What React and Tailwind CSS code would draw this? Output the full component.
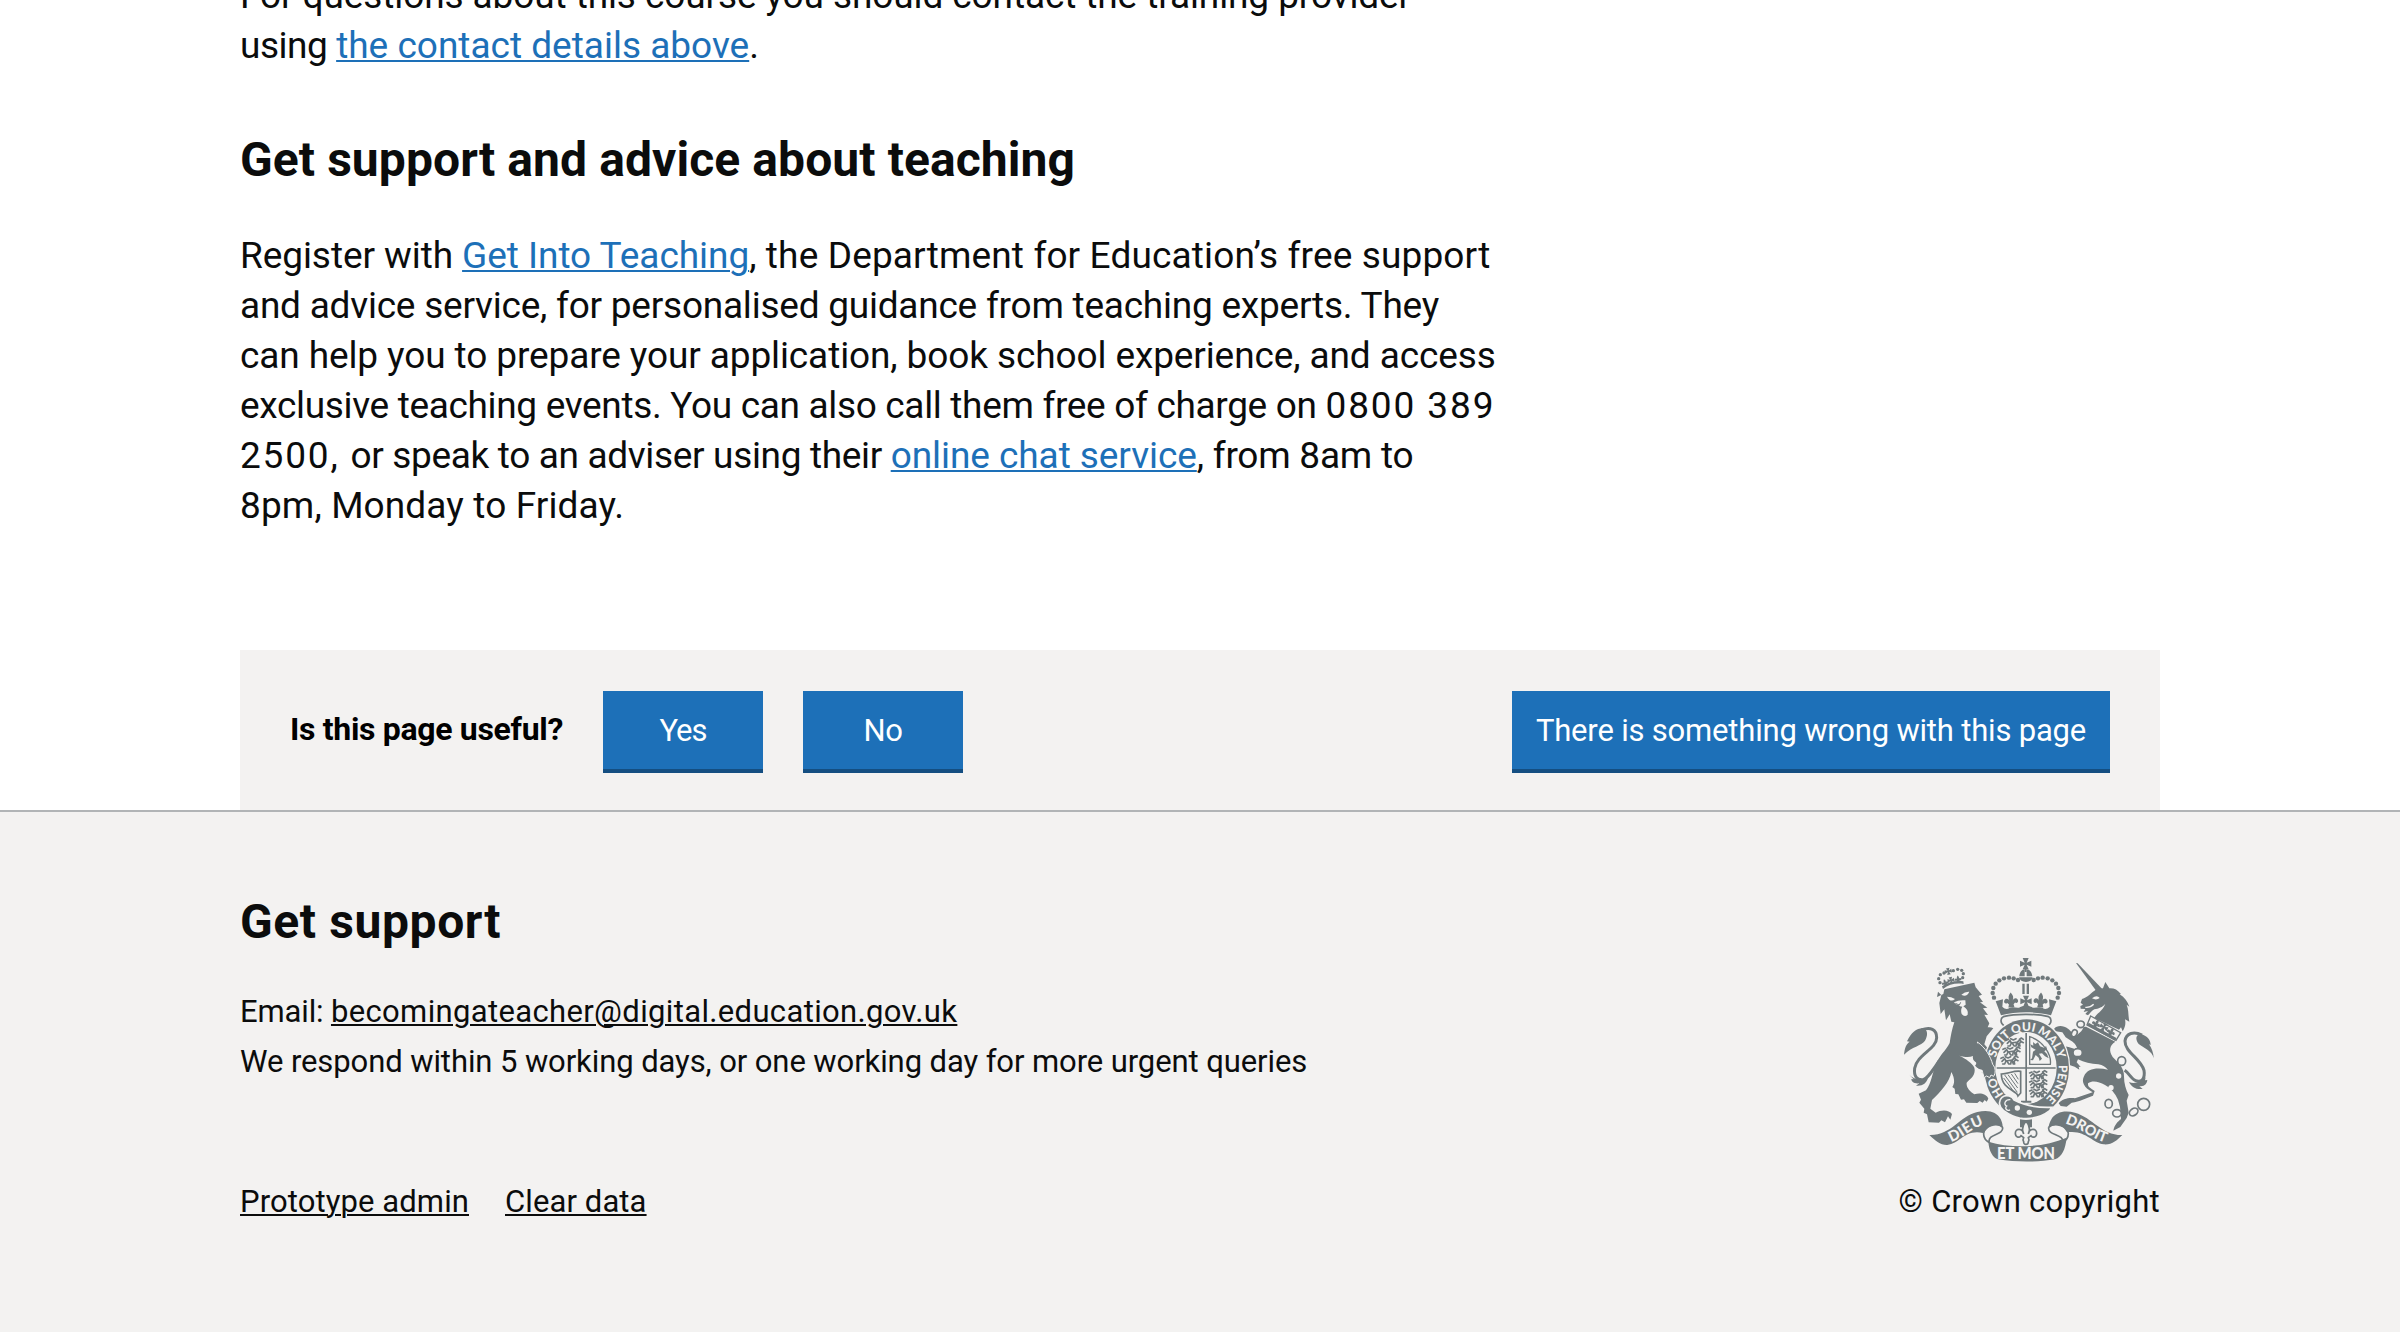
const crestDots = [
  [414, 120], [401, 115], [387, 113], [372, 115], [358, 121], [347, 131],
  [340, 144], [338, 159], [342, 173], [461, 120], [474, 115], [488, 113],
  [503, 115], [517, 121], [528, 131], [535, 144], [537, 159], [533, 173],
];

const lionCrownDots = [
  [180, 128], [176, 116], [181, 104], [192, 99], [220, 92], [233, 88], [245, 91], [250, 101], [248, 113],
];

function Fleur({ x, y, scale = 1, rotate = 0 }) {
  return (
    <path
      transform={`translate(${x} ${y}) rotate(${rotate}) scale(${scale})`}
      d="M0-18c6 7 8 13 4 22 2-7 11-9 14-1 2 6-4 9-8 6l-4 4 2 8H-8l2-8-4-4c-4 3-10 0-8-6 3-8 12-6 14 1-4-9-2-15 4-22Z"
    />
  );
}

function CrossPatty({ x, y, scale = 1, rotate = 0 }) {
  return (
    <path
      transform={`translate(${x} ${y}) rotate(${rotate}) scale(${scale})`}
      d="M-9-17H9L3-3l14-6V9L3 3l6 14H-9L-3 3l-14 6V-9l14 6Z"
    />
  );
}

function Passant({ x, y }) {
  return (
    <path
      transform={`translate(${x} ${y})`}
      fill="none"
      stroke="currentColor"
      strokeWidth="5"
      strokeLinecap="round"
      strokeLinejoin="round"
      d="M0 4l8-8 4 7 18-3 8-6 4 5-6 5 2 8M12 3l-4 9h-6M28 2l-2 10h-6M16 5l4 6M40-2l8 4M4-8l-7 3M30 0l4 12M36-8l6-4 6 4M10-10l8 4 8-4"
    />
  );
}

function Crest() {
  return (
    <svg viewBox="57 42 783 639" className="block h-[213px] w-[261px] text-[#6f787b]" fill="currentColor" aria-hidden="true">
      {/* crown */}
      <CrossPatty x={437} y={71} />
      <path d="M434 86h6v10h-6Z" />
      <path d="M418 109c1-13 8-20 16-21v21ZM440 88c9 1 16 8 17 21h-17ZM417 112h41c-2 9-9 14-20 14s-19-5-21-14Z" />
      <path d="M427 131h7v31h-7ZM440 131h7v31h-7Z" />
      {crestDots.map(([cx, cy]) => (
        <circle key={`${cx}-${cy}`} cx={cx} cy={cy} r="6.6" />
      ))}
      <CrossPatty x={438} y={184} />
      <Fleur x={393} y={178} scale={1.15} rotate={-3} />
      <Fleur x={482} y={178} scale={1.15} rotate={3} />
      <path d="M347 184l22-6-2 22c8 8 15 8 21 4 14-6 24 4 33-3 10-5 24-5 34 0 9 7 19-3 33 3 6 4 13 4 21-4l-2-22 22 6-16 42c-46-12-104-12-150 0Z" />
      <path d="M438 223c-26 0-49 2-68 7-10 5-9 21 2 27M438 223c26 0 49 2 68 7 10 5 9 21-2 27" fill="none" stroke="currentColor" strokeWidth="5" />

      {/* lion */}
      <path d="M171 171l19-9 3-14 90-20 4 14 19 22-10 4 13 18-9 1 22 16-13 2 15 20-11-1 15 26-5 12c6-1 12 0 17 3l-20 24-7 24c12 13 21 28 25 43 6 13 5 28 0 37-3 8-11 13-20 12l-13-8 5-8-13-2-12-10 6-8c-10-5-14-11-12-21-10 4-23 4-41-1 18 8 40 23 45 36 6 24-14 34-23 45-2 15 10 26 23 35 17-5 36-2 42 13l-5 9-6-5-6 8-9-5-7 6-33-1-7-10-9 1-8-16-9-1-2-16-7-5c7-12 8-25-3-45-5 31-33 60-58 84l-5 26 16 12c18-10 40-9 49 4l-5 17-7-10-9 18-11-6-7 7-31-1-5-24-10-5 2-12-15-18 5-9-7-18 22-10c17-23 18-48 27-70 9-32 33-49 44-72 3-21 7-42 14-62l-9-2-5-22-11 18-5-33-11 14-4-33 6-24-10-10Z" />
      <path d="M201 170q13 0 24 7-13 12-24-7ZM244 164q11-10 24-9-8 18-24 9Z" fill="#f3f2f1" />
      <path d="M222 187q14-8 34-6l1 13-7 5q17 11 13 25-9 9-18-2-4-14 2-22-8 0-12-6-8 2-13-7Z" fill="#f3f2f1" />
      <path d="M226 190l12 5 4-8" fill="none" stroke="currentColor" strokeWidth="3" />
      <path d="M189 147c18-14 39-19 62-15l-1-8c-23-3-44 1-64 15Z" />
      {lionCrownDots.map(([cx, cy]) => (
        <circle key={`${cx}-${cy}`} cx={cx} cy={cy} r="5" />
      ))}
      <CrossPatty x={205} y={94} scale={0.6} rotate={-12} />
      <CrossPatty x={213} y={121} scale={0.6} rotate={-12} />
      <Fleur x={195} y={127} scale={0.55} rotate={-18} />
      <Fleur x={234} y={116} scale={0.55} rotate={-5} />
      <path d="M72 344c2-20 6-31 17-39l-8-1c13-26 28-39 47-39 18 3 15 25 7 37-11 16-39 17-63 42Z" />
      <path d="M124 270c27-11 46-2 46 23 0 35-60 51-66 92-3 23 6 36 25 34 14-3 29-29 49-57" fill="none" stroke="currentColor" strokeWidth="9" />
      <path d="M88 404c12 13 33 19 56 10-5 16-16 25-36 23l10-7c-15 2-24-5-24-13l7 1Z" />

      {/* unicorn */}
      <path d="M588 69l5 1 73 76c-4 6-9 9-15 10Z" />
      <path d="M669 145l7-19 12 19c14-1 24 4 35 17l-4 1c15 9 24 22 29 37l-8-6c7 18 4 32 8 51l-13-7c3 14 0 24-7 36l-5-12-6 7-42-20-32-15c6-14 24-19 33-43-8 11-21 14-33 17-8 4-13 12-19 18l-8-4 8-9-13 3 5-9-14-1-1-8 8-4-7-6 4-11c17-4 27-18 43-29Z" />
      <path d="M636 175q15-12 23-1-10 8-23 1Z" fill="#f3f2f1" />
      <path d="M616 202c10 1 19-3 25-9" fill="none" stroke="#f3f2f1" strokeWidth="4" />
      <path d="M632 228l90 50-14 23-87-46Z" fill="#f3f2f1" stroke="currentColor" strokeWidth="4" />
      <g transform="rotate(29 670 262)">
        <Fleur x={646} y={261} scale={0.7} />
        <CrossPatty x={671} y={261} scale={0.75} />
        <Fleur x={697} y={261} scale={0.7} />
        <path d="M625 271h95v9h-95Z" />
      </g>
      <path d="M618 260l88 45c-19 12-19 28-8 46 18 19 35 32 34 59 0 21 6 39 14 55l-6 17 6 36-6 16-19 27-21 11c3-17 13-27 23-35l-3-36-6-22c-9-20-22-35-39-44-20-11-38-14-51-5-2 12 9 15 20 23l-5 14c-22 8-39 17-64 21l-15 12-18-2-6-8c10-15 35-18 49-15l53-18c-28-15-34-32-26-48 10-24 39-27 72-20-8-8-15-14-29-16-22-2-43-5-61-15l-4 9 12 14-6-1 2 9-14-9-18-6-13-15c-3-16-13-25-7-35l6 8 1-12c9-4 29 8 40 8-5-14-9-19-20-26l-16-10-10-15-21-3-4-7c9-12 28-11 42-1 8 5 15 19 26 20 12-9 18-16 20-24Z" />
      <path d="M821 355c-4-22-28-30-45-43-14-19-4-31 7-29 17 3 29 17 29 32l-5-2c8 11 14 27 14 42Z" />
      <path d="M786 285c-24-12-48-6-51 18-1 33 48 53 57 88 4 25-7 37-25 31-14-5-19-22-33-31" fill="none" stroke="currentColor" strokeWidth="9" />
      <path d="M747 426c15 7 34 1 50-14l-2 9 7-1c-2 15-11 19-24 19l10 8c-21 2-33-5-41-21Z" />
      <g fill="#f3f2f1" stroke="currentColor" strokeWidth="5">
        <ellipse cx="602" cy="253" rx="11" ry="10" />
        <ellipse cx="583" cy="280" rx="8" ry="11" transform="rotate(25 583 280)" />
        <ellipse cx="593" cy="338" rx="14" ry="12" />
        <ellipse cx="725" cy="363" rx="12" ry="13" />
        <ellipse cx="686" cy="491" rx="11" ry="13" />
        <ellipse cx="711" cy="520" rx="13" ry="11" />
        <ellipse cx="761" cy="516" rx="14" ry="10" transform="rotate(-35 761 516)" />
        <circle cx="791" cy="493" r="18" />
      </g>
      <circle cx="716" cy="408" r="8" fill="#f3f2f1" />
      <circle cx="693" cy="443" r="8" fill="#f3f2f1" />

      {/* garter */}
      <ellipse cx="440" cy="385" rx="131" ry="151" fill="#f3f2f1" />
      <ellipse cx="440" cy="385" rx="127" ry="147" />
      <ellipse cx="438" cy="384" rx="92" ry="108" fill="#f3f2f1" />
      <path id="garter-motto" d="M440 497A96 112 0 0 1 344 385A96 112 0 0 1 440 273A96 112 0 0 1 536 385A96 112 0 0 1 440 497" fill="none" />
      <g fill="#f3f2f1" fontFamily="Lato, sans-serif" fontWeight="900" fontSize="36" textAnchor="middle">
        <text><textPath href="#garter-motto" startOffset="108">HO</textPath></text>
        <text><textPath href="#garter-motto" startOffset="236">SOIT</textPath></text>
        <text><textPath href="#garter-motto" startOffset="317">QUI</textPath></text>
        <text><textPath href="#garter-motto" startOffset="398">MAL</textPath></text>
        <text><textPath href="#garter-motto" startOffset="450">Y</textPath></text>
        <text><textPath href="#garter-motto" startOffset="536">PENSE</textPath></text>
      </g>

      {/* quartered shield */}
      <path d="M436 279h5v103h86v4h-86v96h13v6h-31v-6h13v-96h-86v-4h86Z" />
      <Passant x={382} y={306} />
      <Passant x={372} y={333} />
      <Passant x={366} y={360} />
      <Passant x={452} y={404} />
      <Passant x={452} y={431} />
      <Passant x={452} y={458} />
      <path d="M449 290v83h62c4-28-20-70-62-83Z" fill="none" stroke="currentColor" strokeWidth="4" />
      <path d="M459 306l7 6 8-5 6 12 14 5 4-7 3 11-8 6 8 8 5 13-11-6-9-9-9 1 9 15-7 7-3-10-9-8-8 16-9-1 6-5 3-20 8-6-13-7-3-9 9 4Z" />
      <path d="M364 402c20 0 40-12 58-8v65l-8 9c-3-18-49-18-50-66Z" fill="none" stroke="currentColor" strokeWidth="5" />
      <path d="M374 405l38 52M384 404l29 40M394 402l20 29M404 400l11 18M371 414l32 43" stroke="currentColor" strokeWidth="3" />

      {/* lion paw over the garter */}
      <path
        d="M292 306c24 16 40 44 46 67 10 12 9 26 3 36l-8-4-4 8-9-5-8 5-3-12-8-30Z"
        stroke="#f3f2f1"
        strokeWidth="3"
      />
      <path d="M282 300l32 30-2 62-22-10Z" />

      {/* garter buckle */}
      <path d="M366 472c14-10 31-3 36 8 35 18 70 24 113 22l-6 10c-18 14-50 28-90 22-17-3-34-12-48-22-14-9-17-30-5-40Z" stroke="#f3f2f1" strokeWidth="5" />
      <path d="M391 479c-17-1-21 15-11 19-8 8 3 17 10 11" fill="none" stroke="#f3f2f1" strokeWidth="4" />
      <circle cx="412" cy="504" r="8" fill="#f3f2f1" />
      <circle cx="448" cy="517" r="8" fill="#f3f2f1" />

      {/* pendant fleur-de-lis */}
      <path d="M420 538c12 3 24 3 36 0v24h-36Z" />
      <path
        d="M438 543c-12 14-13 26-7 39-3-17-25-19-25-2 0 12 11 15 17 7l8 6-2 7 2 5c-1 11 14 11 14 0l2-5-2-7 8-6c6 8 17 5 17-7 0-17-22-15-25 2 6-13 5-25-7-39Z"
        fill="#f3f2f1"
        stroke="currentColor"
        strokeWidth="5"
      />

      {/* ribbon */}
      <path d="M148 585c66 2 88-55 144-69 34-8 58 0 70 21 6 13 6 21 6 26-13-13-36-11-47 4l-12 12c-55-12-69 32-107 36-20 1-37-13-54-30Z" />
      <path d="M727 585c-63 1-88-52-142-67-32-9-58-1-70 18-7 12-9 20-9 27 15-13 38-10 48 4l7 10c55-9 76 32 110 36 25 2 40-12 56-28Z" />
      <path d="M368 562c3 26-48 17-40 47M368 562c-16-16-55-6-57 18-1 15 7 23 19 29M506 562c-4 26 49 19 42 47M506 562c16-16 57-6 59 18 0 15-7 23-19 29" fill="none" stroke="currentColor" strokeWidth="5" />
      <path d="M325 605c68 20 159 20 235-12-4 36-14 57-35 65-53 9-116 9-171 0-16-6-27-25-29-53Z" />
      <g fill="#f3f2f1" fontFamily="Lato, sans-serif" fontWeight="900" textAnchor="middle">
        <path id="ribbon-left" d="M203 608C243 602 275 560 322 552" fill="none" />
        <path id="ribbon-right" d="M546 548C600 560 640 602 684 609" fill="none" />
        <text fontSize="44" textLength="112"><textPath href="#ribbon-left" startOffset="50%">DIEU</textPath></text>
        <text fontSize="43"><textPath href="#ribbon-right" startOffset="50%">DROIT</textPath></text>
        <text x="438" y="656" fontSize="48" textLength="174" lengthAdjust="spacingAndGlyphs">ET MON</text>
      </g>
    </svg>
  );
}

const link = "text-[#1d70b8] underline decoration-2 underline-offset-2";
const footerLink = "underline decoration-2 underline-offset-2";
const button =
  "h-[82px] border-b-4 border-[#144e81] bg-[#1d70b8] pt-0.5 text-[31px] leading-[74px] text-white";

export default function App() {
  return (
    <div className="h-[1332px] overflow-hidden bg-white font-['Roboto',sans-serif] text-[#0b0c0c]">
      <main className="mx-auto w-[1920px]">
        <div className="whitespace-nowrap text-[37px] leading-[50px]">
          <p className="-mt-[29px]">
            <span className="block tracking-[-0.1px]">For questions about this course you should contact the training provider</span>
            <span className="block">
              <span className="tracking-[-0.46px]">using </span>
              <a className={link}>the contact details above</a>.
            </span>
          </p>
          <h2 className="mt-[59px] text-[48px] font-bold leading-[60px] tracking-[0.08px]">
            Get support and advice about teaching
          </h2>
          <p className="mt-[41px]">
            <span className="block">
              <span className="tracking-[-0.08px]">Register with </span>
              <a className={`${link} tracking-[-0.05px]`}>Get Into Teaching</a>
              <span className="tracking-[0.14px]">, the Department for Education’s free support</span>
            </span>
            <span className="block tracking-[-0.23px]">and advice service, for personalised guidance from teaching experts. They</span>
            <span className="block tracking-[-0.11px]">can help you to prepare your application, book school experience, and access</span>
            <span className="block tracking-[-0.33px]">
              exclusive teaching events. You can also call them free of charge on{" "}
              <span className="tracking-[1.9px]">0800 389</span>
            </span>
            <span className="block">
              <span className="tracking-[1.8px]">2500, </span>
              <span className="tracking-[-0.34px]">or speak to an adviser using their </span>
              <a className={`${link} tracking-[-0.07px]`}>online chat service</a>
              <span className="tracking-[-0.24px]">, from 8am to</span>
            </span>
            <span className="block tracking-[0.13px]">8pm, Monday to Friday.</span>
          </p>
        </div>

        <section className="mt-[119px] flex h-[160px] items-start bg-[#f3f2f1] px-[50px] pt-[41px]">
          <h2 className="w-[313px] whitespace-nowrap text-[32px] font-bold leading-[76px] tracking-[-0.32px] text-black">
            Is this page useful?
          </h2>
          <button className={`${button} w-[160px] tracking-[-1px]`}>Yes</button>
          <button className={`${button} ml-10 w-[160px] tracking-[-0.5px]`}>No</button>
          <button className={`${button} ml-auto w-[598px] whitespace-nowrap tracking-[-0.19px]`}>
            There is something wrong with this page
          </button>
        </section>
      </main>

      <footer className="h-[522px] border-t-2 border-[#b1b4b6] bg-[#f3f2f1]">
        <div className="mx-auto flex w-[1920px] justify-between whitespace-nowrap text-[31px]">
          <div className="pt-20">
            <h2 className="text-[48px] font-bold leading-[60px] tracking-[0.6px]">Get support</h2>
            <ul className="mt-[35px] leading-[50px]">
              <li>
                <span className="tracking-[-0.14px]">Email: </span>
                <a className={`${footerLink} tracking-[0.35px]`}>becomingateacher@digital.education.gov.uk</a>
              </li>
              <li className="tracking-[-0.09px]">
                We respond within 5 working days, or one working day for more urgent queries
              </li>
            </ul>
            <div className="mt-[95px] flex gap-9 leading-10 tracking-[0.1px]">
              <a className={footerLink}>Prototype admin</a>
              <a className={footerLink}>Clear data</a>
            </div>
          </div>
          <div className="flex flex-col items-end pt-[142px]">
            <Crest />
            <span className="mt-[15px] leading-10 tracking-[0.28px]">© Crown copyright</span>
          </div>
        </div>
      </footer>
    </div>
  );
}
